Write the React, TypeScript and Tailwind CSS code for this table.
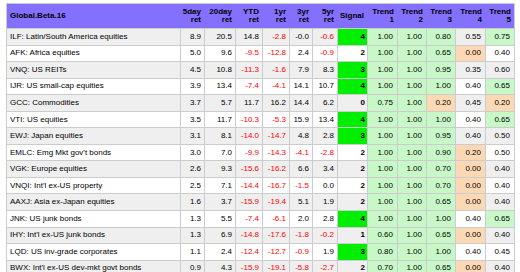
import React from "react";

type Row = { name: string; nums: string[]; signal: number; trends: string[] };

const rows: Row[] = [
  { name: "ILF: Latin/South America equities", nums: ["8.9", "20.5", "14.8", "-2.8", "-0.0", "-0.6"], signal: 4, trends: ["1.00", "1.00", "0.80", "0.55", "0.75"] },
  { name: "AFK: Africa equities", nums: ["5.0", "9.6", "-9.5", "-12.8", "2.4", "-0.9"], signal: 2, trends: ["1.00", "1.00", "0.65", "0.00", "0.40"] },
  { name: "VNQ: US REITs", nums: ["4.5", "10.8", "-11.3", "-1.6", "7.9", "8.3"], signal: 3, trends: ["1.00", "1.00", "0.95", "0.35", "0.60"] },
  { name: "IJR: US small-cap equities", nums: ["3.9", "13.4", "-7.4", "-4.1", "14.1", "10.7"], signal: 4, trends: ["1.00", "1.00", "1.00", "0.40", "0.65"] },
  { name: "GCC: Commodities", nums: ["3.7", "5.7", "11.7", "16.2", "14.4", "6.2"], signal: 0, trends: ["0.75", "1.00", "0.20", "0.45", "0.20"] },
  { name: "VTI: US equities", nums: ["3.5", "11.7", "-10.3", "-5.3", "15.9", "13.4"], signal: 4, trends: ["1.00", "1.00", "1.00", "0.40", "0.65"] },
  { name: "EWJ: Japan equities", nums: ["3.1", "8.1", "-14.0", "-14.7", "4.8", "2.8"], signal: 3, trends: ["1.00", "1.00", "0.95", "0.40", "0.50"] },
  { name: "EMLC: Emg Mkt gov't bonds", nums: ["3.0", "7.0", "-9.9", "-14.3", "-4.1", "-2.8"], signal: 2, trends: ["1.00", "1.00", "0.90", "0.20", "0.50"] },
  { name: "VGK: Europe equities", nums: ["2.6", "9.3", "-15.6", "-16.2", "6.6", "3.4"], signal: 2, trends: ["1.00", "1.00", "0.70", "0.00", "0.40"] },
  { name: "VNQI: Int'l ex-US property", nums: ["2.5", "7.1", "-14.4", "-16.7", "-1.5", "0.0"], signal: 2, trends: ["1.00", "1.00", "0.70", "0.00", "0.40"] },
  { name: "AAXJ: Asia ex-Japan equities", nums: ["1.6", "3.7", "-15.9", "-19.4", "5.1", "1.9"], signal: 2, trends: ["1.00", "1.00", "0.65", "0.00", "0.40"] },
  { name: "JNK: US junk bonds", nums: ["1.3", "5.5", "-7.4", "-6.1", "2.0", "2.8"], signal: 4, trends: ["1.00", "1.00", "1.00", "0.40", "0.65"] },
  { name: "IHY: Int'l ex-US junk bonds", nums: ["1.3", "6.9", "-14.8", "-17.6", "-1.8", "-0.2"], signal: 1, trends: ["0.60", "1.00", "0.65", "0.00", "0.40"] },
  { name: "LQD: US inv-grade corporates", nums: ["1.1", "2.4", "-12.4", "-12.7", "-0.9", "1.9"], signal: 3, trends: ["0.80", "1.00", "1.00", "0.40", "0.45"] },
  { name: "BWX: Int'l ex-US dev-mkt govt bonds", nums: ["0.9", "4.3", "-15.9", "-19.1", "-5.8", "-2.7"], signal: 2, trends: ["0.70", "1.00", "0.65", "0.00", "0.40"] },
];

const headers: [string, string][] = [
  ["5day", "ret"],
  ["20day", "ret"],
  ["YTD", "ret"],
  ["1yr", "ret"],
  ["3yr", "ret"],
  ["5yr", "ret"],
  ["Signal", ""],
  ["Trend", "1"],
  ["Trend", "2"],
  ["Trend", "3"],
  ["Trend", "4"],
  ["Trend", "5"],
];

const cols =
  "grid grid-cols-[173px_23px_30px_26px_26px_22px_24px_29px_29px_28px_28px_29px_28px] gap-x-px";

function trendBg(v: string, i: number, rowBg: string) {
  const n = parseFloat(v);
  if (n <= 0.2) return "bg-[#fdd8b5]";
  if (n >= (i === 4 ? 0.65 : 0.6)) return "bg-[#c8f7c8]";
  return rowBg;
}

export default function App() {
  return (
    <div className="w-[520px] h-[272px] overflow-hidden bg-white pl-[6px] pt-[3px] font-['Liberation_Sans',Arial,sans-serif] text-[8px] text-black">
      <div className="w-[509px] border border-[#cccccc] bg-[#cccccc]">
        <div className={`${cols} bg-[#8470ff] h-[24px] font-bold leading-[8.5px]`}>
          <div className="flex items-center pl-[3px]">Global.Beta.16</div>
          {headers.map(([a, b], i) => (
            <div key={i} className="flex flex-col items-end justify-center pr-[3px]">
              <span>{a}</span>
              {b && <span>{b}</span>}
            </div>
          ))}
        </div>
        <div className={`${cols} gap-y-px mt-px auto-rows-[15.55px] leading-[10px]`}>
          {rows.map((r, ri) => {
            const rowBg = ri % 2 === 0 ? "bg-[#efefef]" : "bg-white";
            return (
              <React.Fragment key={ri}>
                <div className={`${rowBg} flex items-center pl-[3px] whitespace-nowrap`}>{r.name}</div>
                {r.nums.map((n, ni) => (
                  <div
                    key={ni}
                    className={`${rowBg} flex items-center justify-end pr-[3px] ${
                      n.startsWith("-") && n !== "-0.0" ? "text-[#ff0000]" : ""
                    }`}
                  >
                    {n}
                  </div>
                ))}
                <div
                  className={`${r.signal >= 3 ? "bg-[#00ee00]" : rowBg} flex items-center justify-end pr-[2px] font-bold`}
                >
                  {r.signal}
                </div>
                {r.trends.map((t, ti) => (
                  <div key={ti} className={`${trendBg(t, ti, rowBg)} flex items-center justify-end pr-[4px]`}>
                    {t}
                  </div>
                ))}
              </React.Fragment>
            );
          })}
        </div>
      </div>
    </div>
  );
}
